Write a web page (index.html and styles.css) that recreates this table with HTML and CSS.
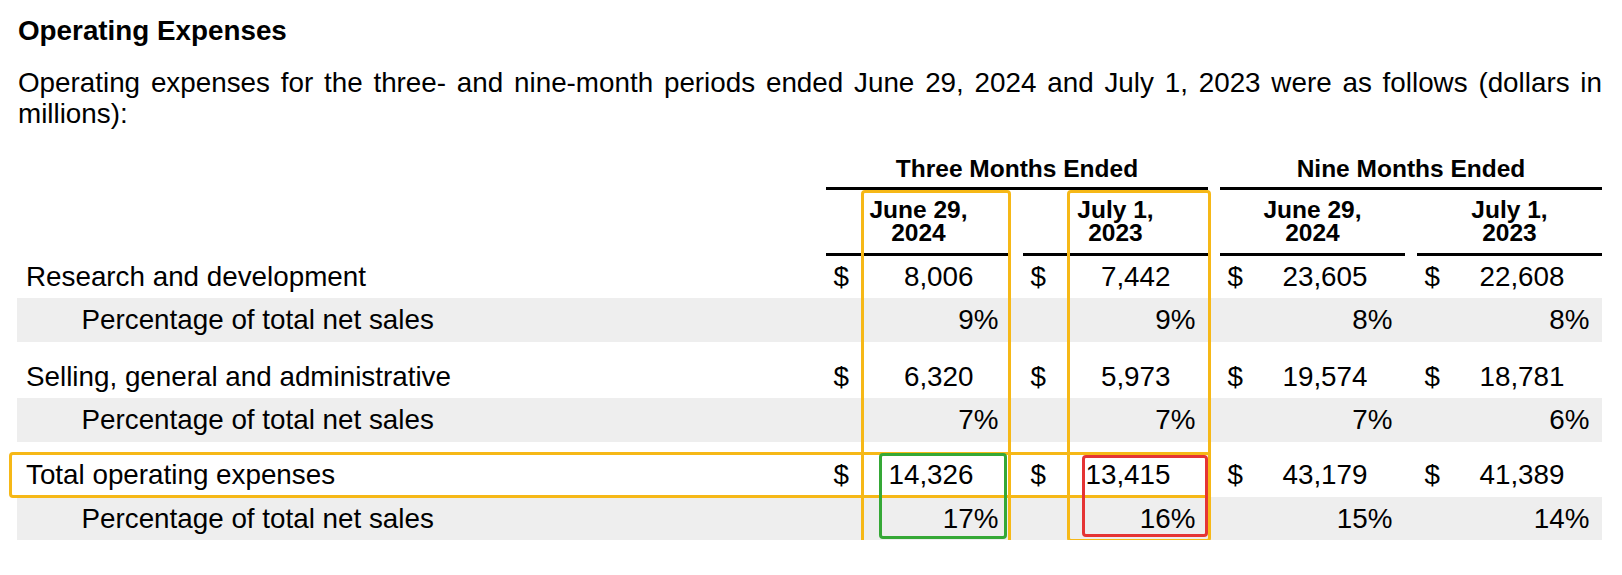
FILE: index.html
```html
<!DOCTYPE html>
<html lang="en">
<head>
<meta charset="utf-8">
<title>Operating Expenses</title>
<link rel="stylesheet" href="styles.css">
</head>
<body>
<div class="page">
  <h2 class="title">Operating Expenses</h2>
  <p class="intro">Operating expenses for the three- and nine-month periods ended June 29, 2024 and July 1, 2023 were as follows (dollars in millions):</p>

  <div class="fin">
    <div class="row">
      <div></div>
      <div class="grp">Three Months Ended</div>
      <div class="grp">Nine Months Ended</div>
    </div>
    <div class="row">
      <div></div>
      <div class="dh">June 29,<br>2024</div>
      <div class="dh">July 1,<br>2023</div>
      <div class="dh">June 29,<br>2024</div>
      <div class="dh">July 1,<br>2023</div>
    </div>

    <div class="row line first">
      <div class="label">Research and development</div>
      <div class="money"><span>$</span><span>8,006</span></div>
      <div class="money"><span>$</span><span>7,442</span></div>
      <div class="money"><span>$</span><span>23,605</span></div>
      <div class="money"><span>$</span><span>22,608</span></div>
    </div>
    <div class="row line shade">
      <div class="label sub">Percentage of total net sales</div>
      <div class="pc">9%</div>
      <div class="pc">9%</div>
      <div class="pc">8%</div>
      <div class="pc">8%</div>
    </div>
    <div class="spacer s1"></div>
    <div class="row line">
      <div class="label">Selling, general and administrative</div>
      <div class="money"><span>$</span><span>6,320</span></div>
      <div class="money"><span>$</span><span>5,973</span></div>
      <div class="money"><span>$</span><span>19,574</span></div>
      <div class="money"><span>$</span><span>18,781</span></div>
    </div>
    <div class="row line shade">
      <div class="label sub">Percentage of total net sales</div>
      <div class="pc">7%</div>
      <div class="pc">7%</div>
      <div class="pc">7%</div>
      <div class="pc">6%</div>
    </div>
    <div class="spacer s2"></div>
    <div class="row line">
      <div class="label">Total operating expenses</div>
      <div class="money"><span>$</span><span>14,326</span></div>
      <div class="money"><span>$</span><span>13,415</span></div>
      <div class="money"><span>$</span><span>43,179</span></div>
      <div class="money"><span>$</span><span>41,389</span></div>
    </div>
    <div class="row line shade">
      <div class="label sub">Percentage of total net sales</div>
      <div class="pc">17%</div>
      <div class="pc">16%</div>
      <div class="pc">15%</div>
      <div class="pc">14%</div>
    </div>
  </div>

  <div class="hl hl-col-a"></div>
  <div class="hl hl-col-b"></div>
  <div class="hl hl-row"></div>
  <div class="hl hl-green"></div>
  <div class="hl hl-red"></div>
</div>
</body>
</html>
```

FILE: styles.css
```css
html, body {
  margin: 0;
  background: #ffffff;
}
body {
  font-family: "Liberation Sans", Arial, Helvetica, sans-serif;
  color: #000000;
}
.page {
  position: relative;
  padding: 15px 20px 0 18px;
}
.title {
  margin: 0;
  font-size: 27.8px;
  line-height: 31px;
  font-weight: bold;
}
.intro {
  margin: 20.7px 0 0;
  font-size: 27.8px;
  line-height: 31px;
  text-align: justify;
}
.fin {
  margin: 26.3px 0 0 -1px;
}
.row {
  display: grid;
  grid-template-columns: 797px repeat(4, 185px);
  column-gap: 12px;
}
.grp {
  grid-column: span 2;
  text-align: center;
  font-weight: bold;
  font-size: 24.5px;
  line-height: 27px;
  padding-bottom: 5px;
  border-bottom: 3px solid #000;
}
.dh {
  text-align: center;
  font-weight: bold;
  font-size: 24.5px;
  line-height: 22.5px;
  padding: 9.5px 0 8.5px;
  border-bottom: 3px solid #000;
}
.line {
  font-size: 27.8px;
  line-height: 43.5px;
  white-space: nowrap;
}
.line.first {
  line-height: 42.5px;
}
.shade {
  background: #eeeeee;
}
.label {
  padding-left: 9px;
}
.label.sub {
  padding-left: 64.5px;
}
.money {
  display: flex;
  justify-content: space-between;
  padding: 0 37.5px 0 7.5px;
}
.pc {
  text-align: right;
  padding-right: 12.5px;
}
.spacer.s1 {
  height: 13px;
}
.spacer.s2 {
  height: 11.5px;
}
.hl {
  position: absolute;
  box-sizing: border-box;
  border: 3px solid #f6b817;
  border-radius: 4px;
}
.hl-col-a {
  left: 861px;
  top: 190px;
  width: 150px;
  height: 354px;
}
.hl-col-b {
  left: 1067px;
  top: 190px;
  width: 144px;
  height: 351.5px;
}
.hl-row {
  left: 9px;
  top: 451.5px;
  width: 1202px;
  height: 46px;
}
.hl-green {
  left: 879px;
  top: 453px;
  width: 128px;
  height: 86px;
  border-color: #35a836;
}
.hl-red {
  left: 1082px;
  top: 455px;
  width: 126px;
  height: 82px;
  border-color: #e53434;
}
```
